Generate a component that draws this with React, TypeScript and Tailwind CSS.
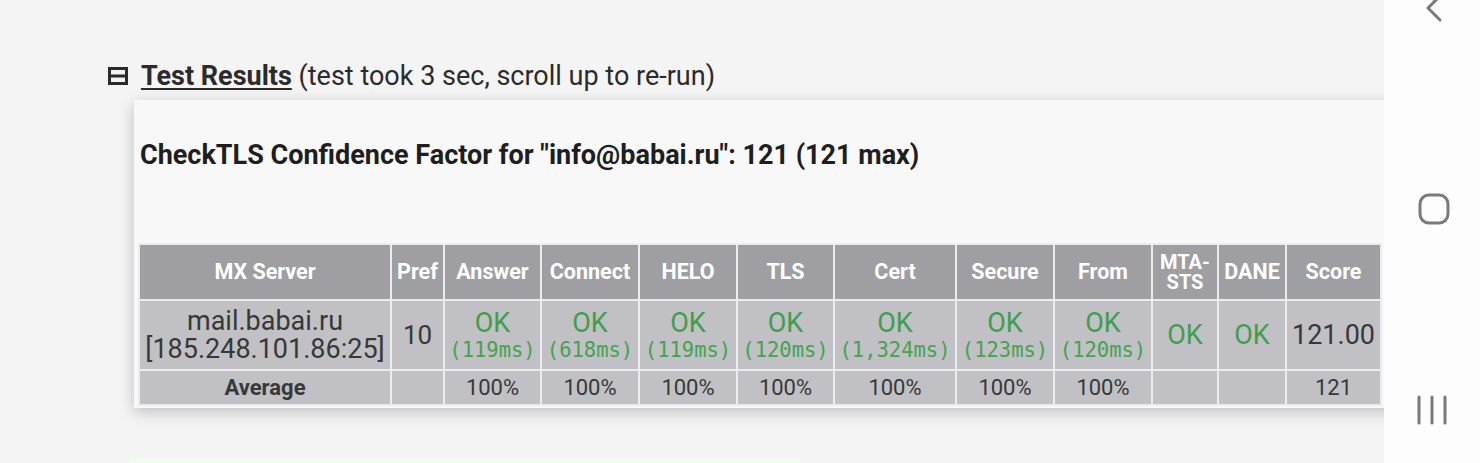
import { ReactNode } from "react";

const heads = [
  { label: "MX Server", w: "w-[250px]" },
  { label: "Pref", w: "w-[51px]" },
  { label: "Answer", w: "w-[95px]" },
  { label: "Connect", w: "w-[96px]" },
  { label: "HELO", w: "w-[96px]" },
  { label: "TLS", w: "w-[95px]" },
  { label: "Cert", w: "w-[120px]" },
  { label: "Secure", w: "w-[96px]" },
  { label: "From", w: "w-[96px]" },
  { label: "MTA-STS", w: "w-[64px]" },
  { label: "DANE", w: "w-[66px]" },
  { label: "Score", w: "w-[93px]" },
];

const timings = ["119ms", "618ms", "119ms", "120ms", "1,324ms", "123ms", "120ms"];

const Ok = ({ ms }: { ms?: string }) => (
  <div className="flex flex-col items-center">
    <span className="text-[27px] leading-[30px] text-[#3f9e4b]">OK</span>
    {ms && <span className="font-['DejaVu_Sans_Mono',monospace] text-[20.5px] leading-[24px] text-[#44a350]">({ms})</span>}
  </div>
);

const Cell = ({ children, bold }: { children?: ReactNode; bold?: boolean }) => (
  <td className={`bg-[#c0c0c5] text-center align-middle p-0 ${bold ? "font-bold" : ""}`}>{children}</td>
);

export default function App() {
  return (
    <div className="flex w-[1480px] h-[463px] overflow-hidden font-['Roboto',sans-serif] text-[#2b2b2b]">
      <main className="flex-1 bg-[#f4f4f4] overflow-hidden pl-[108px] pt-[60px] relative">
        <div className="flex items-center gap-[13px] h-[32px]">
          <svg width="20" height="18" viewBox="0 0 20 18" className="shrink-0">
            <rect x="1.5" y="1.5" width="17" height="15" fill="none" stroke="#2b2b2b" strokeWidth="3" />
            <line x1="2" y1="9" x2="18" y2="9" stroke="#2b2b2b" strokeWidth="3" />
          </svg>
          <p className="text-[27px] leading-[32px] whitespace-nowrap">
            <span className="font-bold underline underline-offset-[3px] decoration-2">Test Results</span>{" "}
            (test took 3 sec, scroll up to re-run)
          </p>
        </div>

        <section className="ml-[26px] mt-[8px] w-[1280px] h-[308px] bg-[#f8f8f8] shadow-[0_4px_14px_rgba(0,0,0,0.22)] pl-[4px] pt-[39px]">
          <h2 className="ml-[2px] text-[27px] font-bold leading-[32px] whitespace-nowrap text-[#1e1e1e]">
            CheckTLS Confidence Factor for "info@babai.ru": 121 (121 max)
          </h2>
          <table className="mt-[72px] table-fixed border-separate border-spacing-[2px] bg-[#ececec]">
            <thead>
              <tr className="h-[54px]">
                {heads.map((h) => (
                  <th key={h.label} className={`${h.w} bg-[#9e9ea3] text-white font-bold text-center p-0 ${h.label === "MTA-STS" ? "text-[20px] leading-[20px]" : "text-[21.5px]"}`}>
                    {h.label === "MTA-STS" ? (
                      <>
                        MTA-
                        <br />
                        STS
                      </>
                    ) : (
                      h.label
                    )}
                  </th>
                ))}
              </tr>
            </thead>
            <tbody>
              <tr className="h-[68px]">
                <Cell>
                  <div className="text-[27px] leading-[28px] text-[#383838]">
                    mail.babai.ru
                    <br />
                    [185.248.101.86:25]
                  </div>
                </Cell>
                <Cell>
                  <span className="text-[26px] text-[#383838]">10</span>
                </Cell>
                {timings.map((t, i) => (
                  <Cell key={i}>
                    <Ok ms={t} />
                  </Cell>
                ))}
                <Cell>
                  <Ok />
                </Cell>
                <Cell>
                  <Ok />
                </Cell>
                <Cell>
                  <span className="text-[27px] text-[#383838]">121.00</span>
                </Cell>
              </tr>
              <tr className="h-[32px] text-[22px] text-[#383838]">
                <Cell bold>Average</Cell>
                <Cell />
                {timings.map((_, i) => (
                  <Cell key={i}>100%</Cell>
                ))}
                <Cell />
                <Cell />
                <Cell>121</Cell>
              </tr>
            </tbody>
          </table>
        </section>

        <div className="ml-[22px] mt-[50px] w-[670px] h-[20px] bg-[#f1faee]" />
      </main>

      <aside className="w-[96px] bg-[#fdfdfd] flex flex-col items-center relative">
        <svg width="22" height="30" viewBox="0 0 22 30" className="mt-[-8px] ml-[4px]">
          <polyline points="17,4 5,16 17,28" fill="none" stroke="#7a7a7a" strokeWidth="3" strokeLinecap="round" strokeLinejoin="round" />
        </svg>
        <svg width="32" height="32" viewBox="0 0 32 32" className="mt-[171px] ml-[4px]">
          <rect x="2" y="2" width="28" height="28" rx="9" fill="none" stroke="#7a7a7a" strokeWidth="3" />
        </svg>
        <svg width="32" height="30" viewBox="0 0 32 30" className="mt-[170px]">
          <line x1="3" y1="2" x2="3" y2="28" stroke="#7a7a7a" strokeWidth="3" strokeLinecap="round" />
          <line x1="16" y1="2" x2="16" y2="28" stroke="#7a7a7a" strokeWidth="3" strokeLinecap="round" />
          <line x1="29" y1="2" x2="29" y2="28" stroke="#7a7a7a" strokeWidth="3" strokeLinecap="round" />
        </svg>
      </aside>
    </div>
  );
}
